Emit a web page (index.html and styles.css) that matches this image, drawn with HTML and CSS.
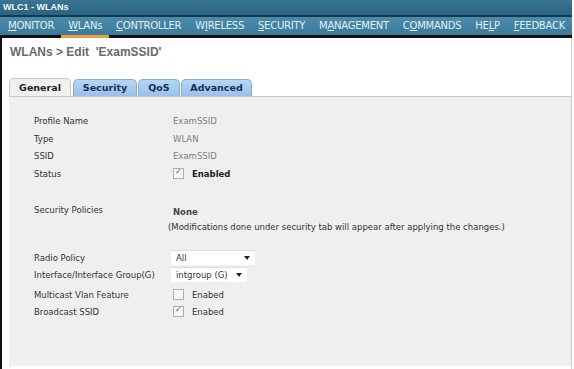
FILE: index.html
```html
<!DOCTYPE html>
<html lang="en">
<head>
  <meta charset="UTF-8" />
  <title>WLC1 - WLANs</title>
  <link rel="stylesheet" href="styles.css">
</head>
<body>
  <div class="titlebar">WLC1 - WLANs</div>
  <div class="menu">
    <a><u>M</u>ONITOR</a>
    <a class="active"><u>W</u>LANs</a>
    <a><u>C</u>ONTROLLER</a>
    <a>W<u>I</u>RELESS</a>
    <a><u>S</u>ECURITY</a>
    <a>M<u>A</u>NAGEMENT</a>
    <a>C<u>O</u>MMANDS</a>
    <a>HE<u>L</u>P</a>
    <a><u>F</u>EEDBACK</a>
  </div>

  <div class="page">
    <h1>WLANs &gt; Edit &nbsp;'ExamSSID'</h1>

    <div class="tabs">
      <div class="tab current t-general">General</div>
      <div class="tab t-security">Security</div>
      <div class="tab t-qos">QoS</div>
      <div class="tab t-advanced">Advanced</div>
    </div>

    <div class="panel">
      <div class="row"><span class="label">Profile Name</span><span class="value dim">ExamSSID</span></div>
      <div class="row"><span class="label">Type</span><span class="value dim">WLAN</span></div>
      <div class="row"><span class="label">SSID</span><span class="value dim">ExamSSID</span></div>
      <div class="row"><span class="label">Status</span><span class="value"><span class="check on"></span><span class="strong">Enabled</span></span></div>

      <div class="row policies">
        <span class="label">Security Policies</span>
        <span class="value">
          <b>None</b>
          <span class="note">(Modifications done under security tab will appear after applying the changes.)</span>
        </span>
      </div>

      <div class="row radio"><span class="label">Radio Policy</span><span class="value"><span class="select wide">All<i></i></span></span></div>
      <div class="row"><span class="label">Interface/Interface Group(G)</span><span class="value"><span class="select">intgroup (G)<i></i></span></span></div>
      <div class="row multicast"><span class="label">Multicast Vlan Feature</span><span class="value"><span class="check"></span>Enabed</span></div>
      <div class="row"><span class="label">Broadcast SSID</span><span class="value"><span class="check on"></span>Enabed</span></div>
    </div>
  </div>
</body>
</html>
```

FILE: styles.css
```css
body {
  margin: 0;
  font-family: 'DejaVu Sans', Verdana, sans-serif;
  background: #fff;
  color: #333;
  width: 572px;
  height: 369px;
  overflow: hidden;
}

.titlebar {
  height: 15px;
  line-height: 14px;
  padding-left: 3px;
  background: linear-gradient(#3a7592, #2b6383);
  color: #f2f6f8;
  font-family: 'Liberation Sans', Arial, sans-serif;
  font-size: 9px;
  font-weight: bold;
  border-bottom: 2px solid #17384a;
}

.menu {
  display: flex;
  height: 18px;
  line-height: 18px;
  background: linear-gradient(#4a8aab, #3b7a9b);
  border-bottom: 3px solid #111;
  padding-left: 8px;
  font-size: 10px;
}

.menu a {
  color: #e4eef3;
  margin-right: 14px;
  letter-spacing: -0.25px;
  position: relative;
}

.menu a.active::after {
  content: '';
  position: absolute;
  left: -7px;
  right: -7px;
  bottom: -3px;
  height: 3px;
  background: #e9a040;
}

.page {
  border-left: 2px solid #111;
  border-right: 1px solid #ccc;
  height: 331px;
  padding-left: 7px;
}

h1 {
  margin: 0;
  padding: 7px 0 0 1px;
  height: 40px;
  box-sizing: border-box;
  font-family: 'Liberation Sans', Arial, sans-serif;
  font-size: 12px;
  color: #6a6a6a;
  font-weight: bold;
}

.tabs {
  display: flex;
  height: 18px;
  align-items: flex-end;
}

.tab {
  box-sizing: border-box;
  height: 17px;
  line-height: 16px;
  text-align: center;
  margin-right: 1px;
  background: linear-gradient(#b6d6f4, #97c1ea);
  border: 1px solid #8aaccc;
  border-bottom: none;
  border-radius: 5px 5px 0 0;
  font-size: 9.5px;
  font-weight: bold;
  color: #1c2f52;
}

.tab.current {
  height: 18px;
  line-height: 17px;
  background: #f0f0f0;
  border-color: #c8c8c8;
  color: #222;
}

.t-general { width: 62px; margin-right: 2px; }
.t-security { width: 64px; }
.t-qos { width: 42px; }
.t-advanced { width: 71px; }

.panel {
  box-sizing: border-box;
  background: #efefef;
  border-top: 1px solid #c8c8c8;
  height: 270px;
  padding: 15px 0 0 25px;
  font-size: 8.5px;
}

.row {
  display: flex;
  height: 17.7px;
  align-items: center;
}

.label {
  width: 139px;
  color: #333;
}

.value {
  display: flex;
  align-items: center;
  color: #333;
}

.dim {
  color: #808080;
}

.strong {
  font-weight: bold;
  color: #222;
}

.check {
  display: inline-block;
  width: 9px;
  height: 9px;
  border: 1px solid #a8b0c0;
  background: #f6f6f6;
  margin: 0 8px 0 0;
  position: relative;
}

.check.on::after {
  content: '\2713';
  position: absolute;
  left: 1px;
  top: -2px;
  font-size: 8px;
  color: #555;
}

.policies {
  margin-top: 22px;
  height: 34px;
  align-items: flex-start;
}

.policies .value {
  flex-direction: column;
  align-items: flex-start;
}

.policies b {
  color: #444;
  line-height: 14px;
}

.note {
  margin-left: -5px;
  line-height: 16px;
}

.radio {
  margin-top: 11px;
  height: 16px;
}

.multicast {
  margin-top: 3px;
  height: 16.5px;
}

.select {
  display: flex;
  justify-content: space-between;
  align-items: center;
  width: 66px;
  height: 14px;
  padding: 0 5px;
  background: #fff;
  border-top: 1px solid #ddd;
  margin-left: -2px;
  color: #333;
}

.select.wide {
  width: 74px;
}

.select i {
  width: 0;
  height: 0;
  border-left: 3px solid transparent;
  border-right: 3px solid transparent;
  border-top: 4px solid #222;
}
```
